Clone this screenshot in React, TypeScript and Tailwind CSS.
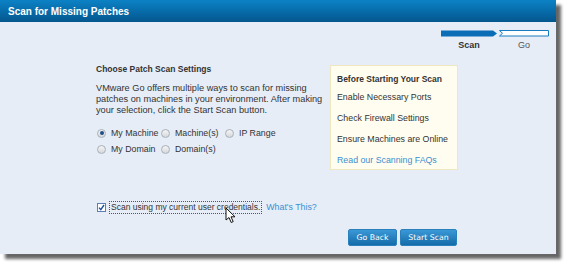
import React from 'react';

const Radio = ({ checked = false }: { checked?: boolean }) => (
    <span className="inline-flex items-center justify-center w-[9px] h-[9px] rounded-full border border-[#a9b0b8] bg-gradient-to-b from-[#f4f4f4] to-[#d6d9dd] shrink-0">
        {checked && <span className="w-[4px] h-[4px] rounded-full bg-[#1d4f86]" />}
    </span>
);

const RadioOption = ({ label, checked }: { label: string; checked?: boolean }) => (
    <div className="flex items-center gap-[5px] h-[12px]">
        <Radio checked={checked} />
        <span>{label}</span>
    </div>
);

const Cursor = () => (
    <svg className="absolute left-[225px] top-[207px]" width="12" height="17" viewBox="0 0 12 17">
        <path d="M1 1 L1 13 L4 10.5 L6.2 15.5 L8.2 14.6 L6 9.8 L10 9.8 Z" fill="#fff" stroke="#111" strokeWidth="1" strokeLinejoin="round" />
    </svg>
);

export default function App() {
    return (
        <div className="w-[572px] h-[270px] bg-white relative" style={{ fontFamily: '"Liberation Sans", Arial, sans-serif' }}>
            <div className="w-[556px] h-[254px] bg-[#e6edf7] shadow-[5px_5px_3px_rgba(0,0,0,0.6)] flex flex-col">
                <div className="h-[22px] px-[8px] flex items-center bg-gradient-to-b from-[#0c82c6] to-[#04578f] text-white font-bold text-[10px]">
                    Scan for Missing Patches
                </div>

                <div className="flex justify-end pr-[6px] pt-[8px]">
                    <div className="w-[110px]">
                        <svg width="110" height="7" viewBox="0 0 110 7" className="block">
                            <path d="M1 0.5 H53 L57 3.5 L53 6.5 H1 Z" fill="#0a6db5" />
                            <path d="M59.5 0.5 H108.5 V6 H59.5 L62.5 3.25 Z" fill="#fff" stroke="#1a7cc0" strokeWidth="1" />
                        </svg>
                        <div className="flex mt-[3px] text-[9px] leading-[11px]">
                            <div className="w-[58px] text-center font-bold text-[#333]">Scan</div>
                            <div className="w-[52px] text-center text-[#555]">Go</div>
                        </div>
                    </div>
                </div>

                <div className="flex mt-[12px] pl-[96px] text-[#333]">
                    <div className="w-[234px]">
                        <div className="text-[8.5px] font-bold leading-[12px]">Choose Patch Scan Settings</div>
                        <p className="mt-[8px] text-[9.2px] leading-[11px] whitespace-nowrap">
                            VMware Go offers multiple ways to scan for missing<br />
                            patches on machines in your environment. After making<br />
                            your selection, click the Start Scan button.
                        </p>
                        <div className="mt-[11px] ml-[1px] grid grid-cols-[64px_64px_64px] gap-y-[4px] text-[8.8px] leading-[12px]">
                            <RadioOption label="My Machine" checked />
                            <RadioOption label="Machine(s)" />
                            <RadioOption label="IP Range" />
                            <RadioOption label="My Domain" />
                            <RadioOption label="Domain(s)" />
                        </div>
                    </div>
                    <div className="mt-[2px] w-[128px] h-[105px] bg-[#fffdf0] border border-[#efe6c2] pl-[6px] pt-[7px] text-[8.8px] leading-[12px]">
                        <div className="font-bold text-[8.5px]">Before Starting Your Scan</div>
                        <div className="mt-[6px]">Enable Necessary Ports</div>
                        <div className="mt-[9px]">Check Firewall Settings</div>
                        <div className="mt-[9px]">Ensure Machines are Online</div>
                        <div className="mt-[9px] text-[#3b8fd1]">Read our Scanning FAQs</div>
                    </div>
                </div>

                <div className="flex items-center mt-[31px] pl-[97px] h-[13px] text-[8.5px]">
                    <span className="w-[9px] h-[9px] border border-[#5b7fb0] bg-white flex items-center justify-center">
                        <svg width="7" height="7" viewBox="0 0 7 7">
                            <path d="M1 3.6 L2.8 5.6 L6 1" fill="none" stroke="#1d4f9a" strokeWidth="1.4" />
                        </svg>
                    </span>
                    <span className="ml-[3px] h-[13px] px-[1px] border border-dotted border-[#555] flex items-center text-[#333]">
                        Scan using my current user credentials.
                    </span>
                    <span className="ml-[4px] text-[#3b8fd1] text-[8.8px]">What's This?</span>
                </div>

                <div className="flex justify-end gap-[3px] mt-[15px] pr-[99px]" style={{ fontFamily: '"DejaVu Sans", Verdana, sans-serif' }}>
                    <button className="w-[49px] h-[17px] rounded-[2px] bg-gradient-to-b from-[#3a98d6] to-[#136ca9] border border-[#2a80bd] text-white text-[7.8px]">Go Back</button>
                    <button className="w-[57px] h-[17px] rounded-[2px] bg-gradient-to-b from-[#3a98d6] to-[#136ca9] border border-[#2a80bd] text-white text-[7.8px]">Start Scan</button>
                </div>
            </div>
            <Cursor />
        </div>
    );
}
